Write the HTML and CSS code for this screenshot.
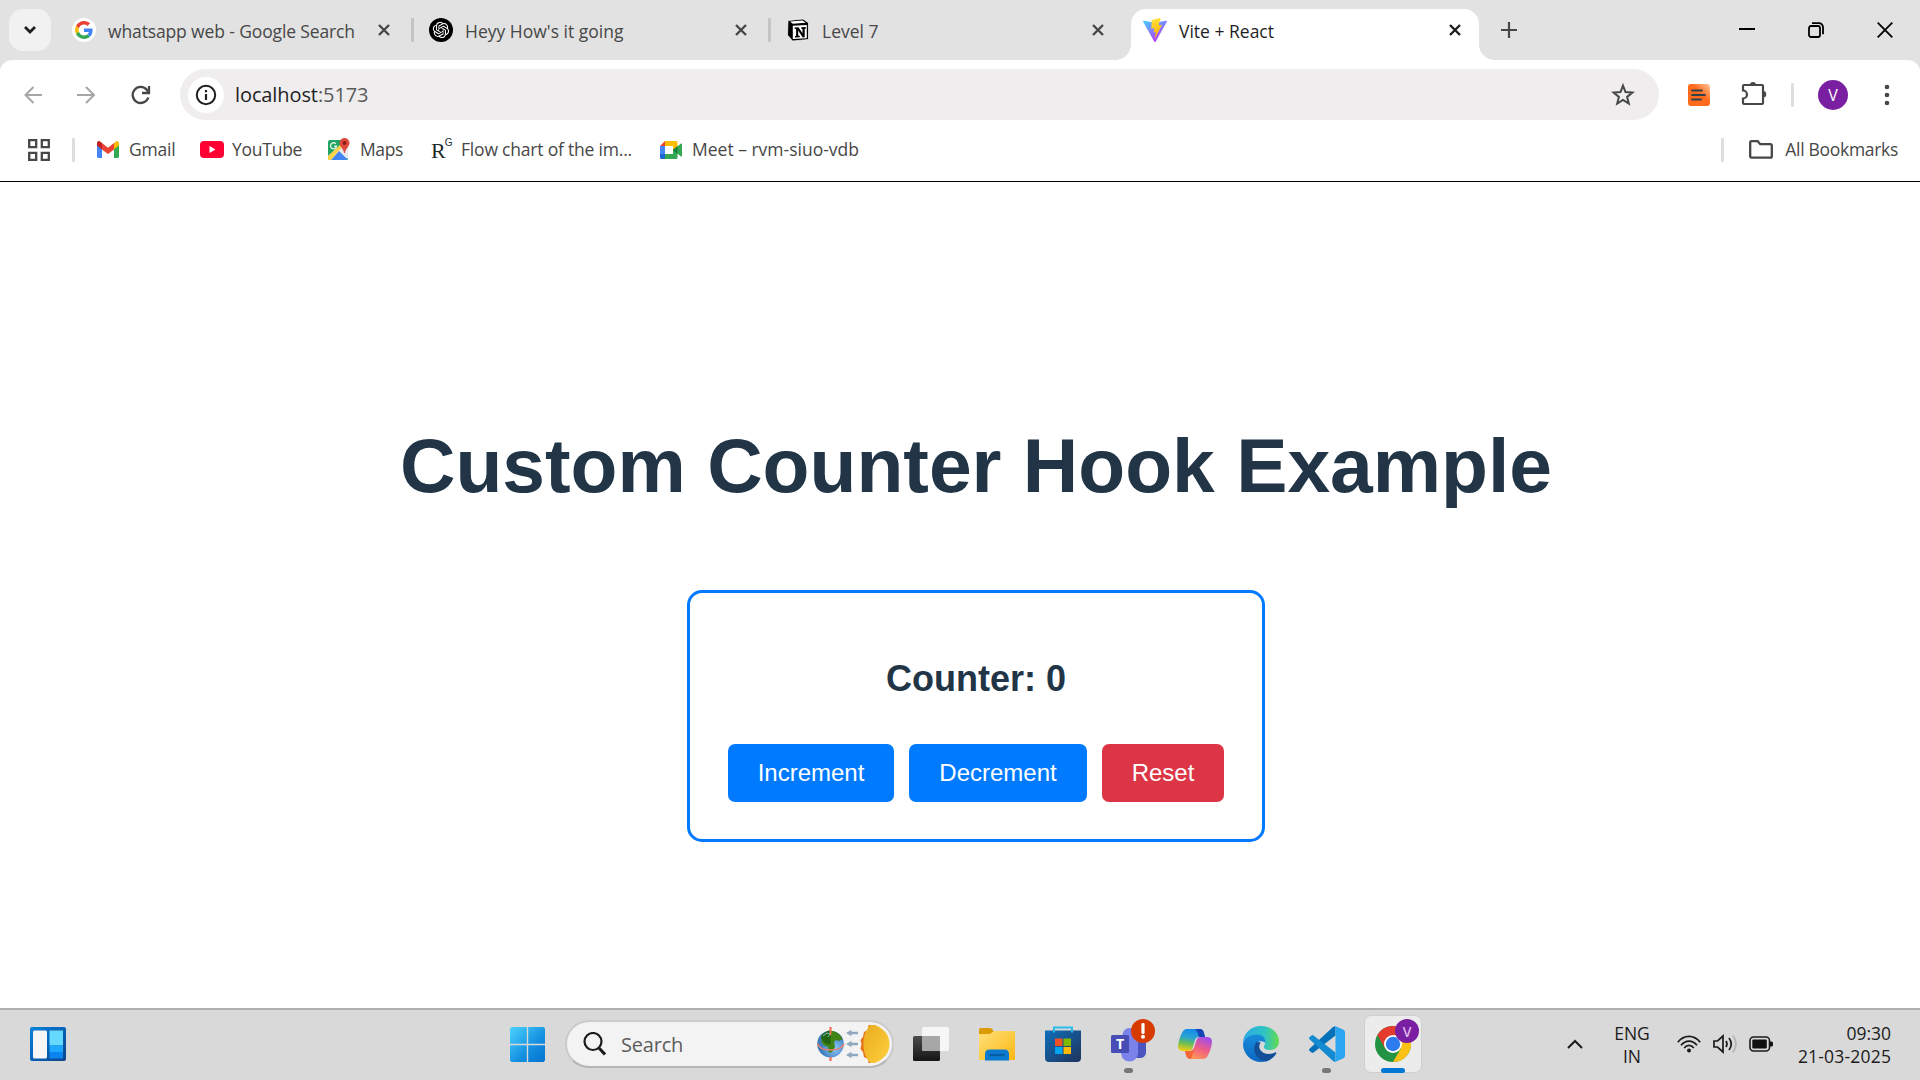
FILE: index.html
```html
<!DOCTYPE html>
<html lang="en">
<head>
<meta charset="utf-8">
<title>Vite + React</title>
<link rel="stylesheet" href="styles.css">
</head>
<body>
<div class="screen">
  <header class="browser">
    <div class="tabstrip">
      <button class="tab-search"><svg width="14" height="10" viewBox="0 0 14 10"><path d="M2 2l5 5 5-5" fill="none" stroke="#1f1f1f" stroke-width="2.8"/></svg></button>
      <div class="tabs">
        <div class="tab">
          <svg class="favicon" viewBox="0 0 24 24"><circle cx="12" cy="12" r="12" fill="#fff"/><g transform="translate(3 3) scale(.375)"><path fill="#EA4335" d="M24 9.500c3.540 0 6.710 1.220 9.210 3.600l6.850-6.850C35.900 2.380 30.470 0 24 0 14.620 0 6.510 5.380 2.560 13.220l7.980 6.190C12.430 13.720 17.740 9.500 24 9.500z"/><path fill="#4285F4" d="M46.980 24.550c0-1.570-.15-3.090-.38-4.550H24v9.020h12.940c-.58 2.960-2.260 5.480-4.780 7.180l7.730 6c4.510-4.180 7.090-10.360 7.090-17.650z"/><path fill="#FBBC05" d="M10.530 28.590c-.48-1.450-.76-2.990-.76-4.590s.27-3.140.76-4.590l-7.980-6.190C.92 16.460 0 20.120 0 24c0 3.880.92 7.540 2.560 10.780l7.970-6.190z"/><path fill="#34A853" d="M24 48c6.480 0 11.930-2.130 15.890-5.810l-7.730-6c-2.150 1.450-4.920 2.300-8.160 2.300-6.260 0-11.570-4.220-13.470-9.910l-7.980 6.190C6.510 42.620 14.620 48 24 48z"/></g></svg>
          <span class="tab-title t-whatsapp">whatsapp web - Google Search</span>
          <svg class="tab-close" viewBox="0 0 14 14"><path d="M2 2l10 10M12 2L2 12"/></svg>
        </div>
        <div class="tab divided">
          <svg class="favicon" viewBox="0 0 24 24"><circle cx="12" cy="12" r="12" fill="#000"/><path transform="translate(3.800 3.800) scale(.68)" fill="#fff" d="M22.2819 9.8211a5.9847 5.9847 0 0 0-.5157-4.9108 6.0462 6.0462 0 0 0-6.5098-2.9A6.0651 6.0651 0 0 0 4.9807 4.1818a5.9847 5.9847 0 0 0-3.9977 2.9 6.0462 6.0462 0 0 0 .7427 7.0966 5.98 5.98 0 0 0 .511 4.9107 6.051 6.051 0 0 0 6.5146 2.9001A5.9847 5.9847 0 0 0 13.2599 24a6.0557 6.0557 0 0 0 5.7718-4.2058 5.9894 5.9894 0 0 0 3.9977-2.9001 6.0557 6.0557 0 0 0-.7475-7.0729zm-9.022 12.6081a4.4755 4.4755 0 0 1-2.8764-1.0408l.1419-.0804 4.7783-2.7582a.7948.7948 0 0 0 .3927-.6813v-6.7369l2.02 1.1686a.071.071 0 0 1 .038.052v5.5826a4.504 4.504 0 0 1-4.4945 4.4944zm-9.6607-4.1254a4.4708 4.4708 0 0 1-.5346-3.0137l.142.0852 4.783 2.7582a.7712.7712 0 0 0 .7806 0l5.8428-3.3685v2.3324a.0804.0804 0 0 1-.0332.0615L9.74 19.9502a4.4992 4.4992 0 0 1-6.1408-1.6464zM2.3408 7.8956a4.485 4.485 0 0 1 2.3655-1.9728V11.6a.7664.7664 0 0 0 .3879.6765l5.8144 3.3543-2.0201 1.1685a.0757.0757 0 0 1-.071 0l-4.8303-2.7865A4.504 4.504 0 0 1 2.3408 7.872zm16.5963 3.8558L13.1038 8.364 15.1192 7.2a.0757.0757 0 0 1 .071 0l4.8303 2.7913a4.4944 4.4944 0 0 1-.6765 8.1042v-5.6772a.79.79 0 0 0-.407-.667zm2.0107-3.0231l-.142-.0852-4.7735-2.7818a.7759.7759 0 0 0-.7854 0L9.409 9.2297V6.8974a.0662.0662 0 0 1 .0284-.0615l4.8303-2.7866a4.4992 4.4992 0 0 1 6.6802 4.66zM8.3065 12.863l-2.02-1.1638a.0804.0804 0 0 1-.038-.0567V6.0742a4.4992 4.4992 0 0 1 7.3757-3.4537l-.142.0805L8.704 5.459a.7948.7948 0 0 0-.3927.6813zm1.0976-2.3654l2.602-1.4998 2.6069 1.4998v2.9994l-2.5974 1.4997-2.6067-1.4997Z"/></svg>
          <span class="tab-title t-heyy">Heyy How's it going</span>
          <svg class="tab-close" viewBox="0 0 14 14"><path d="M2 2l10 10M12 2L2 12"/></svg>
        </div>
        <div class="tab divided">
          <svg class="favicon" viewBox="0 0 24 24"><path d="M2 2.500L17 1l5.500 3.800v16.700L6.500 23 1.500 17z" fill="#000" stroke="#fff" stroke-width=".7"/><path d="M4 3.600l12.400-1.100 3.400 2.200L6.800 5.800zM6.800 7.800l14-.9v13.300l-14 .9z" fill="#fff"/><path d="M8.500 9.500l4-.2 4 6V11l-1.300-.4V9.300l4.600-.2v1.300l-1.100.5v8.300l-2 .2-4.500-7v5.200l1.600.4v1.200l-4.900.3v-1.300l1.200-.5V11L8.500 10.800z" fill="#000"/></svg>
          <span class="tab-title t-level">Level 7</span>
          <svg class="tab-close" viewBox="0 0 14 14"><path d="M2 2l10 10M12 2L2 12"/></svg>
        </div>
        <div class="tab active">
          <svg class="favicon" viewBox="0 0 32 32"><defs><linearGradient id="vA" x1="0" y1="0" x2=".6" y2="1"><stop offset="0" stop-color="#41d1ff"/><stop offset="1" stop-color="#bd34fe"/></linearGradient><linearGradient id="vB" x1=".4" y1="0" x2=".6" y2="1"><stop offset="0" stop-color="#ffea83"/><stop offset=".1" stop-color="#ffdd35"/><stop offset="1" stop-color="#ffa800"/></linearGradient></defs><path d="M31.800 5L16.800 31.600a1 1 0 0 1-1.700 0L.2 5a1 1 0 0 1 1-1.400L16 6.300l14.800-2.700a1 1 0 0 1 1 1.400z" fill="url(#vA)"/><path d="M23 .1L12 2.200a.4.4 0 0 0-.3.4L11 14a.4.4 0 0 0 .5.4l3.100-.7a.4.4 0 0 1 .5.5l-.9 4.500a.4.4 0 0 0 .5.5l1.900-.6a.4.4 0 0 1 .5.5L15.700 26c-.1.5.5.7.8.3L25 9.500a.4.4 0 0 0-.4-.6l-3.200.6a.4.4 0 0 1-.4-.5L23.400.6a.4.4 0 0 0-.4-.5z" fill="url(#vB)"/></svg>
          <span class="tab-title t-vite">Vite + React</span>
          <svg class="tab-close" viewBox="0 0 14 14"><path d="M2 2l10 10M12 2L2 12"/></svg>
        </div>
      </div>
      <svg class="new-tab" width="18" height="18" viewBox="0 0 18 18"><path d="M9 1v16M1 9h16" stroke="#474747" stroke-width="2.2"/></svg>
      <div class="window-buttons">
        <svg width="16" height="16" viewBox="0 0 16 16"><path d="M0 7h16" stroke="#000" stroke-width="2"/></svg>
        <svg width="16" height="16" viewBox="0 0 16 16" fill="none" stroke="#000" stroke-width="1.8"><rect x="1" y="4" width="11" height="11" rx="2"/><path d="M4 1.200h7a4 4 0 0 1 4 4v7"/></svg>
        <svg width="16" height="16" viewBox="0 0 16 16"><path d="M.7.7l14.600 14.600M15.300.7L.7 15.300" stroke="#000" stroke-width="1.800"/></svg>
      </div>
    </div>

    <div class="toolbar">
      <div class="nav">
        <svg width="20" height="20" viewBox="0 0 20 20" fill="none" stroke="#a6a6a6" stroke-width="2"><path d="M19 10H3M10.500 2L2.500 10l8 8"/></svg>
        <svg width="20" height="20" viewBox="0 0 20 20" fill="none" stroke="#a6a6a6" stroke-width="2"><path d="M0 10h17M9 2l8 8-8 8"/></svg>
        <svg width="20" height="20" viewBox="0 0 20 20" fill="none" stroke="#474747" stroke-width="2.300"><path d="M17.300 12.500A8 8 0 1 1 16 5l2 2.500M18 1v7h-7"/></svg>
      </div>
      <div class="omnibox">
        <span class="site-info"><svg width="22" height="22" viewBox="0 0 22 22"><circle cx="11" cy="11" r="9.200" fill="none" stroke="#1f1f1f" stroke-width="2"/><path d="M11 10v6M11 6v2.300" stroke="#1f1f1f" stroke-width="2.200"/></svg></span>
        <span class="url">localhost<span class="port">:5173</span></span>
        <svg class="star" width="24" height="24" viewBox="0 0 24 24"><path d="M12 2.600l2.500 6.500 6.900.4-5.300 4.400 1.700 6.700-5.800-3.700-5.800 3.700 1.700-6.700L2.600 9.500l6.900-.4z" fill="none" stroke="#474747" stroke-width="2"/></svg>
      </div>
      <div class="actions">
        <svg class="ext" width="22" height="22" viewBox="0 0 22 22"><defs><linearGradient id="or" x1="1" y1="0" x2=".3" y2=".7"><stop offset="0" stop-color="#ffc7a0"/><stop offset=".6" stop-color="#ff6a1c"/></linearGradient></defs><rect width="22" height="22" rx="3" fill="url(#or)"/><path d="M4 6.500h10M4 11h13M4 15.500h9" stroke="#31424c" stroke-width="1.800" stroke-linecap="round"/></svg>
        <svg class="puzzle" width="26" height="26" viewBox="0 0 26 26"><path d="M3 5h18a1 1 0 0 1 1 1v17a1 1 0 0 1-1 1H3a1 1 0 0 1-1-1v-4.500a4 4 0 0 0 0-8V6a1 1 0 0 1 1-1z" fill="none" stroke="#474747" stroke-width="2.200"/><path d="M9 5a3 3 0 0 1 6 0zM22 11a3 3 0 0 1 0 6.500z" fill="#474747"/></svg>
        <i class="bar"></i>
        <span class="avatar">V</span>
        <svg class="dots" width="6" height="22" viewBox="0 0 6 22" fill="#474747"><circle cx="3" cy="3" r="2.300"/><circle cx="3" cy="11" r="2.300"/><circle cx="3" cy="19" r="2.300"/></svg>
      </div>
    </div>

    <div class="bookmarks">
      <svg class="apps" width="22" height="22" viewBox="0 0 22 22" fill="none" stroke="#474747" stroke-width="2.300"><path d="M1.200 1.200h7v7h-7zM13.800 1.200h7v7h-7zM1.200 13.800h7v7h-7zM13.800 13.800h7v7h-7z"/></svg>
      <i class="bar"></i>
      <span class="bm bm-gmail"><svg width="22" height="17" viewBox="0 0 22 17"><path d="M0 2h5v15H1.500A1.500 1.500 0 0 1 0 15.500z" fill="#4285f4"/><path d="M17 2h5v13.500a1.500 1.500 0 0 1-1.500 1.500H17z" fill="#34a853"/><path d="M17 2l2-1.500c1.300-1 3 0 3 1.500v2.500L17 8.500z" fill="#fbbc04"/><path d="M5 2l6 4.700L17 2v6.500L11 13 5 8.500z" fill="#ea4335"/><path d="M0 2C0 .5 1.700-.5 3 .5L5 2v6.500L0 4.500z" fill="#c5221f"/></svg><span class="label">Gmail</span></span>
      <span class="bm bm-youtube"><svg width="24" height="17" viewBox="0 0 24 17"><rect width="24" height="17" rx="4" fill="#f03"/><path d="M9.500 5l6 3.500-6 3.500z" fill="#fff"/></svg><span class="label">YouTube</span></span>
      <span class="bm bm-maps"><svg width="22" height="23" viewBox="0 0 22 23"><rect y="2" width="20" height="20" rx="2" fill="#1fa463"/><path d="M0 18L16 4l4 4v12L8 22H0z" fill="#e8eaed"/><path d="M3 22l8-9 9 9z" fill="#4285f4"/><path d="M0 18L13 6l2 2L3 22H0z" fill="#fbd34c"/><path d="M7.800 5.800a3 3 0 1 0 .7 2.400H6" fill="none" stroke="#e8f5e9" stroke-width="1.300"/><path d="M16.500 0a5 5 0 0 1 5 5c0 4-4 5-4.500 10h-1c-.5-5-4.500-6-4.500-10a5 5 0 0 1 5-5z" fill="#dd4b3e"/><circle cx="16.500" cy="5" r="1.900" fill="#8b1a13"/></svg><span class="label">Maps</span></span>
      <span class="bm bm-flow"><span class="rg">R<sup>G</sup></span><span class="label">Flow chart of the im...</span></span>
      <span class="bm bm-meet"><svg width="22" height="18" viewBox="0 0 22 18"><path d="M0 5h5v9H0z" fill="#4285f4"/><path d="M0 5l5-5v5z" fill="#ea4335"/><path d="M5 0h11a1.500 1.500 0 0 1 1.500 1.500V7L13 10V5H5z" fill="#fbbc04"/><path d="M0 13h5v5H1.500A1.500 1.500 0 0 1 0 16.500z" fill="#1967d2"/><path d="M5 13h8V9l4.500-3v10.500A1.500 1.500 0 0 1 16 18H5z" fill="#34a853"/><path d="M13 9l8-6.500c.5-.3 1 0 1 .5v12c0 .5-.5.8-1 .5z" fill="#34a853"/><path d="M13 9l4.500-4v8z" fill="#188038"/></svg><span class="label">Meet – rvm-siuo-vdb</span></span>
      <span class="all"><i class="bar"></i><svg width="24" height="19" viewBox="0 0 24 19"><path d="M1.200 2.500a1.200 1.200 0 0 1 1.200-1.300h6.300l2.500 3h10.300a1.200 1.200 0 0 1 1.300 1.200v11a1.200 1.200 0 0 1-1.300 1.300H2.400a1.200 1.200 0 0 1-1.200-1.300z" fill="none" stroke="#474747" stroke-width="2.300"/></svg><span class="label all-label">All Bookmarks</span></span>
    </div>
  </header>

  <main class="page">
    <h1>Custom Counter Hook Example</h1>
    <section class="counter">
      <h2>Counter: 0</h2>
      <div class="buttons">
        <button class="btn inc">Increment</button>
        <button class="btn dec">Decrement</button>
        <button class="btn reset">Reset</button>
      </div>
    </section>
  </main>

  <footer class="taskbar">
    <div class="widgets"><svg width="36" height="34" viewBox="0 0 36 34"><defs><linearGradient id="wg" x1="0" y1="0" x2="1" y2="1"><stop offset="0" stop-color="#0a84d8"/><stop offset=".5" stop-color="#0763b8"/><stop offset="1" stop-color="#0c4389"/></linearGradient></defs><rect width="36" height="34" rx="2" fill="url(#wg)"/><rect x="3" y="3.500" width="14" height="28" rx="1.500" fill="#f6f6f6"/><rect x="19.500" y="3.500" width="13.500" height="15" fill="#66d9ff"/><rect x="19.500" y="18.500" width="13.500" height="6.500" fill="#1ea7ff"/><rect x="19.500" y="25" width="13.500" height="6.500" fill="#0a84ee"/></svg></div>
    <div class="start"><svg width="35" height="35" viewBox="0 0 36 36"><defs><linearGradient id="st" gradientUnits="userSpaceOnUse" x1="0" y1="0" x2="36" y2="36"><stop offset="0" stop-color="#4cd3ff"/><stop offset=".6" stop-color="#138fe0"/><stop offset="1" stop-color="#0671d0"/></linearGradient></defs><path d="M1.500 0H17.300v17.300H0V1.500zM18.700 0H34.500L36 1.500V17.300H18.700zM0 18.700h17.300V36H1.500L0 34.500zM18.700 18.700H36v15.800L34.500 36h-15.800z" fill="url(#st)"/></svg></div>
    <div class="search">
      <svg class="lens" width="23" height="24" viewBox="0 0 23 24"><circle cx="10" cy="9.500" r="8.500" fill="none" stroke="#1b1b1b" stroke-width="2.200"/><path d="M15.500 15.500L22 22.500" stroke="#1b1b1b" stroke-width="3"/></svg>
      <span class="search-label">Search</span>
      <svg class="equinox" width="74" height="40" viewBox="0 0 74 40"><defs><linearGradient id="sun" x1="0" y1="0" x2="1" y2="1"><stop offset="0" stop-color="#e8ab20"/><stop offset="1" stop-color="#ffd03c"/></linearGradient><radialGradient id="sea" cx=".65" cy=".65"><stop offset="0" stop-color="#8ecbff"/><stop offset="1" stop-color="#3f7bbd"/></radialGradient></defs><path d="M13.500 3v34" stroke="#f4735b" stroke-width="1.800"/><circle cx="13.500" cy="20" r="13.300" fill="url(#sea)"/><path d="M4.500 14c1-4 6-7.500 10.500-7 5 .5 9 4 10.500 8l-3.500 2-3-1-2 2 1 5-3 5-3 1-1-6-4.500-2-2-3z" fill="#3f8415"/><path d="M4 13c2-4 6-6.500 9.500-6.500v14l-5-1-3-3z" fill="#23630f"/><path d="M6 12l4-3 3 1-2 3" stroke="#78c3c9" fill="none"/><path d="M13.500 3v8M13.500 33v4" stroke="#f4735b" stroke-width="1.800"/><path d="M.5 20c3 8 23 8 26.500 0" fill="none" stroke="#ee7d6b" stroke-width="1.500"/><path id="ar" d="M29 9l5.500-3.300v2.100h6.500v2.400h-6.500v2.100z" fill="#90a8bf"/><use href="#ar" y="11"/><use href="#ar" y="22"/><path d="M51.500 1h7v38h-7l-.5-4-4-2-1-5-2.500-3 1-5-1-4 2.500-3 1-5 4-2z" fill="#e8711a"/><path d="M53.500 1h4c9 3 15 10 15 19s-6 16-15 19h-4c-9-8-10-29 0-38z" fill="url(#sun)"/></svg>
    </div>
    <div class="apps-row">
      <div class="slot"><svg width="36" height="34" viewBox="0 0 36 34"><defs><linearGradient id="tv" x1="0" y1="0" x2="0" y2="1"><stop offset="0" stop-color="#4c4c4c"/><stop offset="1" stop-color="#151515"/></linearGradient></defs><rect y="9" width="27" height="25" rx="1.500" fill="url(#tv)"/><rect x="9" width="27" height="24" rx="1.500" fill="#fff" opacity=".75"/><path d="M9 9h18v15H9z" fill="#999" opacity=".75"/></svg></div>
      <div class="slot"><svg width="36" height="34" viewBox="0 0 36 34"><defs><linearGradient id="fo" x1="0" y1="0" x2="1" y2="1"><stop offset="0" stop-color="#ffe07a"/><stop offset="1" stop-color="#fcb712"/></linearGradient></defs><path d="M0 2.500A1.500 1.500 0 0 1 1.500 1H11q1.500 0 2.500 1.500L15 5v5H0z" fill="#dc9b05"/><path d="M0 7h11l4-3h20a1 1 0 0 1 1 1v28H0z" fill="url(#fo)"/><path d="M6 33.500V27q0-4.500 4.500-4.500h15q4.500 0 4.500 4.500v6.500z" fill="#0a7ad1"/><path d="M10.500 28h15" stroke="#06559a" stroke-width="1.600"/></svg></div>
      <div class="slot"><svg width="36" height="36" viewBox="0 0 36 36"><defs><linearGradient id="ms" x1="0" y1="0" x2="1" y2="1"><stop offset="0" stop-color="#0e6fb9"/><stop offset="1" stop-color="#20325c"/></linearGradient></defs><path d="M9 7V1.500h18V7" fill="none" stroke="#29bdee" stroke-width="2"/><path d="M0 4.500h36V32q0 4-4 4H4q-4 0-4-4z" fill="url(#ms)"/><path d="M9 6.500v-2M27 6.500v-2" stroke="#29bdee" stroke-width="2"/><path d="M10 12.500h7.500V20H10z" fill="#f25022"/><path d="M18.500 12.500H26V20h-7.500z" fill="#7fba00"/><path d="M10 21h7.500v7H10z" fill="#00a4ef"/><path d="M18.500 21H26v7h-7.500z" fill="#ffb900"/></svg></div>
      <div class="slot running"><svg width="36" height="36" viewBox="0 0 36 36"><circle cx="29" cy="10" r="5" fill="#5059c9"/><path d="M20 14h15v13q-1 5-6 5h-9z" fill="#4a55bf"/><circle cx="18.500" cy="9" r="7" fill="#7b83eb"/><path d="M10 14h17v13q-1 8.500-8.500 8.500T10 27z" fill="#7b83eb"/><rect width="18" height="18" y="9" rx="1.500" fill="#484eb5"/></svg><span class="teams-t">T</span><span class="badge alert"><svg width="6" height="16" viewBox="0 0 6 16"><path d="M3 1.500v8" stroke="#fff" stroke-width="3.200" stroke-linecap="round"/><circle cx="3" cy="13.800" r="2" fill="#fff"/></svg></span></div>
      <div class="slot"><svg width="34" height="32" viewBox="0 0 34 32"><defs><linearGradient id="cpA" x1=".5" y1="0" x2=".3" y2="1"><stop offset="0" stop-color="#1687ee"/><stop offset=".4" stop-color="#2aa6cf"/><stop offset=".65" stop-color="#67bd57"/><stop offset="1" stop-color="#f4cf12"/></linearGradient><linearGradient id="cpB" x1=".8" y1="0" x2=".3" y2="1"><stop offset="0" stop-color="#9c4cf0"/><stop offset=".5" stop-color="#ee5d88"/><stop offset="1" stop-color="#ff9b50"/></linearGradient></defs><path d="M9 1h13q3 0 4 4l1 4h-6q-3 0-4 3l-2.500 8q-1 3-4 3H5q-5 0-5-5 1-8 4-13 1.500-4 5-4z" fill="url(#cpA)"/><path d="M17 1h5q3 0 4 4l1 4h-6q-2-7-4-8z" fill="#1644b5"/><path d="M25 31H12q-3 0-4-4l-1-4h5q3 0 4-3l2.500-8q1-3 4-3H29q5 0 5 5-1 8-4 13-1.500 4-5 4z" fill="url(#cpB)"/><path d="M7 23h5q3 0 4-3l1-1-4 12q-4 0-5-4z" fill="#f4673b"/></svg></div>
      <div class="slot"><svg width="36" height="36" viewBox="0 0 36 36"><defs><linearGradient id="edA" x1="0" y1=".5" x2="1" y2=".5"><stop offset="0" stop-color="#2ba8e2"/><stop offset=".6" stop-color="#2ec3c6"/><stop offset="1" stop-color="#64dc4c"/></linearGradient><linearGradient id="edB" x1="0" y1="0" x2="0" y2="1"><stop offset="0" stop-color="#168ddb"/><stop offset="1" stop-color="#0c67c2"/></linearGradient></defs><path d="M0 18C0 7 8 0 18 0s18 7 18 15c0 6-4 9-9 9-4 0-7-1.500-6-4 3-4 0-11-8-11C7 9 1 12 0 18z" fill="url(#edA)"/><path d="M0 18C1 12 7 8.500 13 8.500c7 0 10 4.500 9 8-7-4-11 2-8 8 3 7 11 8 18 4-3 5-8 7.500-14 7.500C8 36 0 28 0 18z" fill="url(#edB)"/><path d="M13.500 16c-5 6-2 17 9 19.300C27 34 31 31.500 33 28c1-1.500 0-2-1-1.500-5 2.500-12 2-15-3-1.500-3-.5-5.500 1-7z" fill="#124f98"/></svg></div>
      <div class="slot running"><svg width="36" height="36" viewBox="0 0 36 36"><path d="M26.500.5v9L4.500 26.500q-1 .8-2 0L.5 24.700q-1-1 0-2L24 1z" fill="#0471b8"/><path d="M26.500 35.500v-9L4.500 9.500q-1-.8-2 0L.5 11.300q-1 1 0 2L24 35z" fill="#148bd0"/><path d="M26 0l8.500 3.700Q36 4.500 36 6v24q0 1.500-1.500 2.300L26 36q-1 .2-2-1c2 1 2.500 0 2.500-1V2c0-1-.5-2-2.500-1q1-1.200 2-1z" fill="#2aa5f0"/></svg></div>
      <div class="slot current"><svg width="36" height="36" viewBox="0 0 36 36"><circle cx="18" cy="18" r="18" fill="#229342"/><path d="M18 9h15.600A18 18 0 0 1 18 36l7.800-13.500z" fill="#fbc116"/><path d="M18 18L10.200 22.500 2.400 9A18 18 0 0 1 33.600 9H18z" fill="#e33b2e"/><circle cx="18" cy="18" r="9" fill="#fff"/><circle cx="18" cy="18" r="7.200" fill="#2c7cf0"/></svg><span class="badge user">V</span></div>
    </div>
    <div class="tray">
      <svg class="up" width="16" height="10" viewBox="0 0 16 10"><path d="M1 9l7-7 7 7" fill="none" stroke="#1b1b1b" stroke-width="2"/></svg>
      <div class="lang"><span>ENG</span><span>IN</span></div>
      <svg class="wifi" width="24" height="18" viewBox="0 0 24 18" fill="none" stroke="#1b1b1b" stroke-width="1.700"><path d="M.8 7.200C7-.6 17-.6 23.200 7.200M4 10.300c4.500-5.600 11.500-5.600 16 0M7.200 13c2.800-3.600 6.800-3.600 9.600 0"/><circle cx="12" cy="15.500" r="2" fill="#1b1b1b" stroke="none"/></svg>
      <svg class="speaker" width="25" height="20" viewBox="0 0 25 20" fill="none" stroke="#1b1b1b" stroke-width="1.700"><path d="M1 7v6h3.500l5.500 5V2L4.500 7z"/><path d="M13 7q2 3 0 6M16 4q4.500 6 0 12"/><path d="M20 1.500q6 8.500 0 17" stroke="#b4b4b4"/></svg>
      <svg class="battery" width="25" height="16" viewBox="0 0 25 16"><rect x="1" y="1" width="19.500" height="14" rx="3.500" fill="none" stroke="#1b1b1b" stroke-width="1.600"/><rect x="3.300" y="3.500" width="14.500" height="9" rx="1" fill="#111"/><path d="M21 5.500h1.500q1.500 0 1.500 1.500v2q0 1.500-1.500 1.500H21z" fill="#111"/></svg>
      <div class="clock"><span>09:30</span><span class="date">21-03-2025</span></div>
    </div>
  </footer>
</div>
</body>
</html>
```
FILE: styles.css
```css
* { box-sizing: border-box; }
body { margin: 0; font-family: "Open Sans", "Noto Sans", sans-serif; }
svg { display: block; flex: none; }
button { border: 0; padding: 0; font: inherit; }
.screen { width: 1920px; height: 1080px; display: flex; flex-direction: column; overflow: hidden; background: #fff; }

/* Browser chrome */
.browser { height: 182px; flex: none; background: #e2e2e2; border-bottom: 1px solid #000; }
.tabstrip { height: 60px; display: flex; align-items: center; padding-left: 9px; }
.tab-search { width: 42px; height: 42px; border-radius: 14px; background: #f1f1f1; display: grid; place-items: center; margin-right: 9px; }
.tabs { display: flex; height: 60px; padding-top: 9px; }
.tab { position: relative; width: 357px; height: 51px; padding: 0 26px 9px 12px; display: flex; align-items: center; }
.tab.active { width: 348px; padding-right: 17px; background: #fff; border-radius: 15px 15px 0 0; }
.tab.active::before, .tab.active::after { content: ""; position: absolute; bottom: 0; width: 15px; height: 15px; }
.tab.active::before { left: -15px; background: radial-gradient(circle at 0 0, transparent 14.5px, #fff 15px); }
.tab.active::after { right: -15px; background: radial-gradient(circle at 100% 0, transparent 14.5px, #fff 15px); }
.tab.divided::before { content: ""; position: absolute; left: -6px; top: 9px; width: 3px; height: 24px; border-radius: 1px; background: #c4c4c4; }
.favicon { width: 24px; height: 24px; }
.tab-title { margin: 2px 0 0 12px; font-size: 17.5px; line-height: 26px; color: #474747; white-space: nowrap; flex: 1; }
.t-whatsapp { letter-spacing: -0.13px; }
.active .tab-title { color: #1f1f1f; }
.tab-close { width: 14px; height: 14px; stroke: #474747; stroke-width: 2.4; }
.active .tab-close { stroke: #1f1f1f; }
.new-tab { margin-left: 21px; }
.window-buttons { margin-left: auto; margin-right: 27px; display: flex; gap: 53px; }

.toolbar { height: 69px; background: #fff; border-radius: 12px 12px 0 0; display: flex; align-items: center; }
.nav { width: 180px; padding-left: 23px; display: flex; gap: 34px; }
.omnibox { width: 1479px; height: 51px; border-radius: 26px; background: #efedee; display: flex; align-items: center; padding: 0 24px 0 8px; }
.site-info { width: 36px; height: 36px; border-radius: 50%; background: #fff; display: grid; place-items: center; }
.url { margin-left: 11px; font-size: 20px; letter-spacing: -0.1px; line-height: 28px; color: #1f1f1f; flex: 1; }
.port { color: #5a5a5a; }
.actions { display: flex; align-items: center; }
.ext { margin-left: 29px; }
.puzzle { margin-left: 31px; margin-top: -3px; }
.bar { display: block; width: 3px; height: 24px; border-radius: 1px; background: #dedede; flex: none; }
.actions .bar { margin-left: 24px; }
.avatar { margin-left: 24px; width: 30px; height: 30px; border-radius: 50%; background: #7b1fa2; color: #fff; font-size: 16px; display: grid; place-items: center; }
.dots { margin-left: 36px; }

.bookmarks { height: 52px; background: #fff; display: flex; align-items: center; padding: 0 22px 11px 28px; font-size: 17.5px; color: #474747; white-space: nowrap; }
.bookmarks .bar { margin-left: 22px; }
.bm { display: flex; align-items: center; height: 26px; }
.label { padding-bottom: 2px; }
.bm-gmail { margin-left: 22px; width: 103px; gap: 10px; letter-spacing: -0.2px; }
.bm-youtube { width: 128px; gap: 8px; letter-spacing: -0.25px; }
.bm-maps { width: 103px; gap: 10px; letter-spacing: -0.4px; }
.bm-flow { width: 229px; gap: 9px; letter-spacing: -0.2px; }
.bm-meet { gap: 10px; }
.rg { width: 21px; font-family: "Liberation Serif", serif; font-size: 22px; letter-spacing: -2px; color: #1c2b2b; display: flex; line-height: 28px; padding-top: 2px; }
.rg sup { font-family: "Liberation Sans", sans-serif; font-size: 10px; line-height: 12px; letter-spacing: 0; padding-left: 1px; }
.all { display: flex; align-items: center; margin-left: auto; letter-spacing: -0.3px; }
.all svg { margin-left: 25px; }
.all-label { margin-left: 12px; }

/* Page */
.page { flex: 1; padding: 241px 0 0 32px; display: flex; flex-direction: column; align-items: center; font-family: "Liberation Sans", Arial, sans-serif; color: #213547; }
h1 { margin: 0; font-size: 76.8px; line-height: 84px; white-space: nowrap; }
.counter { margin-top: 83px; width: 578px; height: 252px; border: 3px solid #007bff; border-radius: 15px; padding: 65px 38px 0; display: flex; flex-direction: column; align-items: center; }
h2 { margin: 0; font-size: 36px; line-height: 42px; }
.buttons { margin-top: 44px; display: flex; gap: 15px; }
.btn { height: 58px; border-radius: 7px; background: #007bff; color: #fff; font-size: 24px; white-space: nowrap; }
.inc { width: 166px; }
.dec { width: 178px; }
.reset { width: 122px; background: #dc3545; }

/* Taskbar */
.taskbar { height: 72px; padding-bottom: 2px; background: #d9d9d9; border-top: 2px solid #b0b0b0; display: flex; align-items: center; color: #1b1b1b; }
.widgets { margin-left: 30px; width: 480px; }
.search { margin-left: 20px; width: 329px; height: 48px; border-radius: 24px; background: #f3f3f3; border: 2px solid #cbcbcb; border-bottom-color: #b5b5b5; display: flex; align-items: center; padding-left: 16px; }
.search-label { margin-left: 15px; width: 196px; font-size: 20px; color: #5c5c5c; letter-spacing: -0.2px; }
.apps-row { display: flex; margin-left: 4px; }
.slot { position: relative; width: 66px; height: 56px; display: grid; place-items: center; }
.running::after { content: ""; position: absolute; left: 28px; bottom: -1px; width: 9px; height: 5px; border-radius: 3px; background: #777; }
.current::before { content: ""; position: absolute; left: 5px; top: 0; width: 56px; height: 56px; border-radius: 6px; background: #ececec; box-shadow: 0 0 0 1px #cfcfcf; }
.current::after { content: ""; position: absolute; left: 21px; bottom: -1px; width: 24px; height: 5px; border-radius: 3px; background: #0078d4; }
.current svg { position: relative; }
.teams-t { position: absolute; left: 20px; top: 19px; color: #fff; font-size: 14px; font-weight: 700; line-height: 18px; }
.badge { position: absolute; width: 24px; height: 24px; border-radius: 50%; top: 3px; left: 35px; color: #fff; display: grid; place-items: center; }
.alert { background: #d83b01; }
.user { background: #7b1fa2; font-size: 14px; font-weight: 600; color: #dcb5ec; }
.tray { margin-left: auto; padding-right: 29px; display: flex; align-items: center; font-size: 17.5px; line-height: 22px; }
.lang, .clock { display: flex; flex-direction: column; gap: 1px; }
.lang { align-items: center; width: 60px; margin-left: 19px; }
.wifi { margin-left: 15px; }
.speaker { margin-left: 12px; }
.battery { margin-left: 11px; }
.clock { align-items: flex-end; width: 117px; }
.date { letter-spacing: 0.2px; margin-right: -0.2px; }
```
